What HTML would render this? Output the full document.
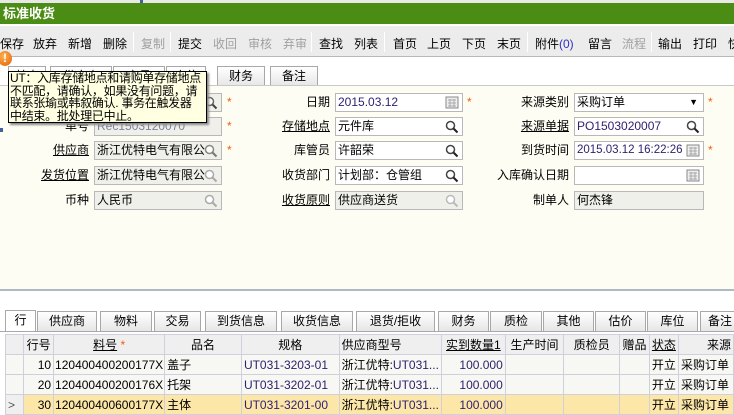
<!DOCTYPE html><html><head><meta charset="utf-8"><style>
*{margin:0;padding:0;box-sizing:border-box}
body{width:734px;height:415px;overflow:hidden;background:#fff;font:12px "Liberation Sans","Noto Sans CJK SC",sans-serif;color:#000;position:relative}
.a{position:absolute;white-space:nowrap}
.title{left:0;top:3px;width:734px;height:21px;background:#4a8c14;color:#fff;font-weight:bold;font-size:13px;line-height:21px;padding-left:3px}
.tb{left:0;top:26px;width:734px;height:31px;background:#ececec;border-bottom:1px solid #b8b8b8}
.tb span{position:absolute;top:9px;font-size:12px}
.sep{position:absolute;top:6px;width:1px;height:20px;background:#c4c4c4;border-right:1px solid #fff}
.dis{color:#a0a0a0}
.tab{position:absolute;height:20px;border:1px solid #a8a8a8;border-bottom:none;background:linear-gradient(#fff,#e6e6e6);text-align:center;line-height:19px}
.form{left:0;top:85px;width:734px;height:206px;background:#fdfdf3;border-top:1px solid #c8c8c8;border-bottom:2px solid #b0b8c0}
.lb{position:absolute;text-align:right;width:120px;line-height:19px}
.u{text-decoration:underline}
.in{position:absolute;height:19px;border:1px solid #b8b8b8;background:#fff;line-height:17px;padding-left:2px;overflow:hidden}
.g{background:#f0f0ea}
.st{position:absolute;color:#f06010;font-size:12px;line-height:19px}
.mag{position:absolute;right:3px;top:2px;width:14px;height:14px}
table{border-collapse:collapse;position:absolute;left:5px;top:334px;table-layout:fixed}
td{border:1px solid #d0d0dc;height:20px;padding:0 2px;white-space:nowrap;overflow:hidden}
tr.h td{background:#efefef;text-align:center}
tr.r td{background:#f7f7f4}
tr.s td{background:#fde7a8}
.num{text-align:right}
.blue{color:#302070}
</style></head><body>
<div class="a" style="left:0;top:0;width:734px;height:3px;background:#e8e8e8"></div>
<div class="a" style="left:140px;top:0;width:3px;height:3px;background:#4060a0"></div>
<div class="a title">标准收货</div>
<div class="a tb">
<span style="left:0">保存</span><span style="left:33px">放弃</span><span style="left:68px">新增</span><span style="left:103px">删除</span><div class="sep" style="left:133px"></div>
<span class="dis" style="left:141px">复制</span><div class="sep" style="left:170px"></div>
<span style="left:178px">提交</span><span class="dis" style="left:213px">收回</span><span class="dis" style="left:248px">审核</span><span class="dis" style="left:283px">弃审</span><div class="sep" style="left:311px"></div>
<span style="left:319px">查找</span><span style="left:354px">列表</span><div class="sep" style="left:384px"></div>
<span style="left:393px">首页</span><span style="left:427px">上页</span><span style="left:462px">下页</span><span style="left:497px">末页</span><div class="sep" style="left:527px"></div>
<span style="left:535px">附件<span style="position:static;color:#3030c0">(0)</span></span><span style="left:588px">留言</span><span class="dis" style="left:622px">流程</span><div class="sep" style="left:651px"></div>
<span style="left:658px">输出</span><span style="left:693px">打印</span><span style="left:728px">快</span>
</div>
<div class="tab" style="left:8px;top:66px;width:38px">基本</div>
<div class="tab" style="left:50px;top:66px;width:62px">供应商</div>
<div class="tab" style="left:113px;top:66px;width:52px">交易</div>
<div class="tab" style="left:166px;top:66px;width:40px">库位</div>
<div class="tab" style="left:217px;top:66px;width:48px">财务</div>
<div class="tab" style="left:270px;top:66px;width:48px">备注</div>
<div class="a form">
<div class="lb" style="left:-31px;top:31px">单号</div><div class="in g" style="left:94px;top:31px;width:128px;color:#8080a0">Rec1503120070</div><div class="st" style="left:227px;top:31px">*</div>
<div class="in g" style="left:94px;top:7px;width:128px"><svg class="mag" viewBox="0 0 14 14"><circle cx="5.5" cy="5.5" r="4" fill="#fff" stroke="#666" stroke-width="1.5"/><path d="M8.5 8.5L12.5 12.5" stroke="#444" stroke-width="2"/></svg></div><div class="st" style="left:227px;top:7px">*</div>
<div class="lb u" style="left:-31px;top:55px">供应商</div><div class="in g" style="left:94px;top:55px;width:128px">浙江优特电气有限公<svg class="mag" viewBox="0 0 14 14"><circle cx="5.5" cy="5.5" r="4" fill="#fff" stroke="#888" stroke-width="1.5"/><path d="M8.5 8.5L12.5 12.5" stroke="#777" stroke-width="2"/></svg></div><div class="st" style="left:227px;top:55px">*</div>
<div class="lb u" style="left:-31px;top:80px">发货位置</div><div class="in g" style="left:94px;top:80px;width:128px">浙江优特电气有限公<svg class="mag" viewBox="0 0 14 14"><circle cx="5.5" cy="5.5" r="4" fill="#fff" stroke="#aaa" stroke-width="1.5"/><path d="M8.5 8.5L12.5 12.5" stroke="#aaa" stroke-width="2"/></svg></div>
<div class="lb" style="left:-31px;top:105px">币种</div><div class="in g" style="left:94px;top:105px;width:128px">人民币<svg class="mag" viewBox="0 0 14 14"><circle cx="5.5" cy="5.5" r="4" fill="#fff" stroke="#aaa" stroke-width="1.5"/><path d="M8.5 8.5L12.5 12.5" stroke="#aaa" stroke-width="2"/></svg></div>

<div class="lb" style="left:210px;top:7px">日期</div><div class="in blue" style="left:335px;top:7px;width:128px">2015.03.12<svg class="mag" viewBox="0 0 14 14"><rect x="1" y="1" width="12" height="11" fill="#eee" stroke="#888"/><path d="M3 4h8M3 7h8M3 10h8M5 3v8M9 3v8" stroke="#aaa"/></svg></div><div class="st" style="left:467px;top:7px">*</div>
<div class="lb u" style="left:210px;top:31px">存储地点</div><div class="in" style="left:335px;top:31px;width:128px">元件库<svg class="mag" viewBox="0 0 14 14"><circle cx="5.5" cy="5.5" r="4" fill="#fff" stroke="#444" stroke-width="1.5"/><path d="M8.5 8.5L12.5 12.5" stroke="#222" stroke-width="2"/></svg></div>
<div class="lb" style="left:210px;top:55px">库管员</div><div class="in" style="left:335px;top:55px;width:128px">许韶荣<svg class="mag" viewBox="0 0 14 14"><circle cx="5.5" cy="5.5" r="4" fill="#fff" stroke="#444" stroke-width="1.5"/><path d="M8.5 8.5L12.5 12.5" stroke="#222" stroke-width="2"/></svg></div>
<div class="lb" style="left:210px;top:80px">收货部门</div><div class="in" style="left:335px;top:80px;width:128px">计划部：仓管组<svg class="mag" viewBox="0 0 14 14"><circle cx="5.5" cy="5.5" r="4" fill="#fff" stroke="#444" stroke-width="1.5"/><path d="M8.5 8.5L12.5 12.5" stroke="#222" stroke-width="2"/></svg></div>
<div class="lb u" style="left:210px;top:105px">收货原则</div><div class="in g" style="left:335px;top:105px;width:128px">供应商送货<svg class="mag" viewBox="0 0 14 14"><circle cx="5.5" cy="5.5" r="4" fill="#fff" stroke="#bbb" stroke-width="1.5"/><path d="M8.5 8.5L12.5 12.5" stroke="#bbb" stroke-width="2"/></svg></div>

<div class="lb" style="left:449px;top:7px">来源类别</div><div class="in" style="left:574px;top:7px;width:130px">采购订单<span style="position:absolute;right:5px;top:0;font-size:9px">▼</span></div><div class="st" style="left:708px;top:7px">*</div>
<div class="lb u" style="left:449px;top:31px">来源单据</div><div class="in blue" style="left:574px;top:31px;width:130px">PO1503020007<svg class="mag" viewBox="0 0 14 14"><circle cx="5.5" cy="5.5" r="4" fill="#fff" stroke="#444" stroke-width="1.5"/><path d="M8.5 8.5L12.5 12.5" stroke="#222" stroke-width="2"/></svg></div>
<div class="lb" style="left:449px;top:55px">到货时间</div><div class="in blue" style="left:574px;top:55px;width:130px;font-size:11.5px">2015.03.12 16:22:26<svg class="mag" viewBox="0 0 14 14" style="background:#fff"><rect x="1" y="1" width="12" height="11" fill="#eee" stroke="#888"/><path d="M3 4h8M3 7h8M3 10h8M5 3v8M9 3v8" stroke="#aaa"/></svg></div><div class="st" style="left:708px;top:55px">*</div>
<div class="lb" style="left:449px;top:80px">入库确认日期</div><div class="in" style="left:574px;top:80px;width:130px"><svg class="mag" viewBox="0 0 14 14"><rect x="1" y="1" width="12" height="11" fill="#eee" stroke="#888"/><path d="M3 4h8M3 7h8M3 10h8M5 3v8M9 3v8" stroke="#aaa"/></svg></div>
<div class="lb" style="left:449px;top:105px">制单人</div><div class="in g" style="left:574px;top:105px;width:130px">何杰锋</div>
</div>
<div class="a" style="left:0;top:128px;width:3px;height:4px;background:#4060a0"></div>
<div class="a" style="left:8px;top:71px;width:199px;height:52px;background:#ffffe1;border:1px solid #000;box-shadow:2px 2px 2px #888;font-size:12px;letter-spacing:-0.3px;line-height:12.5px;padding:0 0 0 1px;overflow:hidden">UT：入库存储地点和请购单存储地点<br>不匹配，请确认，如果没有问题，请<br>联系张瑜或韩叙确认. 事务在触发器<br>中结束。批处理已中止。</div>
<div class="a" style="left:-2px;top:51px;width:14px;height:15px;border-radius:50%;background:radial-gradient(circle at 40% 35%,#ffb050,#e06000);color:#fff;font-weight:bold;font-size:12px;text-align:center;line-height:15px">!</div>

<div class="tab" style="left:5px;top:310px;width:31px;background:#fff;height:22px">行</div>
<div class="tab" style="left:37px;top:311px;width:60px">供应商</div>
<div class="tab" style="left:100px;top:311px;width:52px">物料</div>
<div class="tab" style="left:154px;top:311px;width:47px">交易</div>
<div class="tab" style="left:205px;top:311px;width:72px">到货信息</div>
<div class="tab" style="left:281px;top:311px;width:72px">收货信息</div>
<div class="tab" style="left:356px;top:311px;width:79px">退货/拒收</div>
<div class="tab" style="left:438px;top:311px;width:51px">财务</div>
<div class="tab" style="left:490px;top:311px;width:52px">质检</div>
<div class="tab" style="left:543px;top:311px;width:51px">其他</div>
<div class="tab" style="left:595px;top:311px;width:51px">估价</div>
<div class="tab" style="left:647px;top:311px;width:51px">库位</div>
<div class="tab" style="left:700px;top:311px;width:40px">备注</div>
<div class="a" style="left:0;top:331px;width:734px;height:1px;background:#a8a8a8"></div>
<table>
<colgroup><col style="width:20px"><col style="width:30px"><col style="width:100px"><col style="width:90px"><col style="width:100px"><col style="width:100px"><col style="width:65px"><col style="width:60px"><col style="width:60px"><col style="width:30px"><col style="width:28px"><col style="width:50px"></colgroup>
<tr class="h"><td></td><td>行号</td><td><span class="u">料号</span> <span style="color:#f06010">*</span></td><td>品名</td><td>规格</td><td style="text-align:left">供应商型号</td><td><span class="u">实到数量1</span></td><td>生产时间</td><td>质检员</td><td>赠品</td><td><span class="u">状态</span></td><td style="text-align:left;padding-left:28px">来源</td></tr>
<tr class="r"><td></td><td class="num">10</td><td style="padding:0 1px">120400400200177X</td><td>盖子</td><td class="blue">UT031-3203-01</td><td>浙江优特:<span class="blue">UT031...</span></td><td class="num blue">100.000</td><td></td><td></td><td></td><td>开立</td><td>采购订单</td></tr>
<tr class="r"><td></td><td class="num">20</td><td style="padding:0 1px">120400400200176X</td><td>托架</td><td class="blue">UT031-3202-01</td><td>浙江优特:<span class="blue">UT031...</span></td><td class="num blue">100.000</td><td></td><td></td><td></td><td>开立</td><td>采购订单</td></tr>
<tr class="s"><td style="background:#efefef;color:#555">&gt;</td><td class="num">30</td><td style="padding:0 1px">120400400600177X</td><td>主体</td><td class="blue">UT031-3201-00</td><td>浙江优特:<span class="blue">UT031...</span></td><td class="num blue">100.000</td><td></td><td></td><td></td><td>开立</td><td>采购订单</td></tr>
</table>
</body></html>
